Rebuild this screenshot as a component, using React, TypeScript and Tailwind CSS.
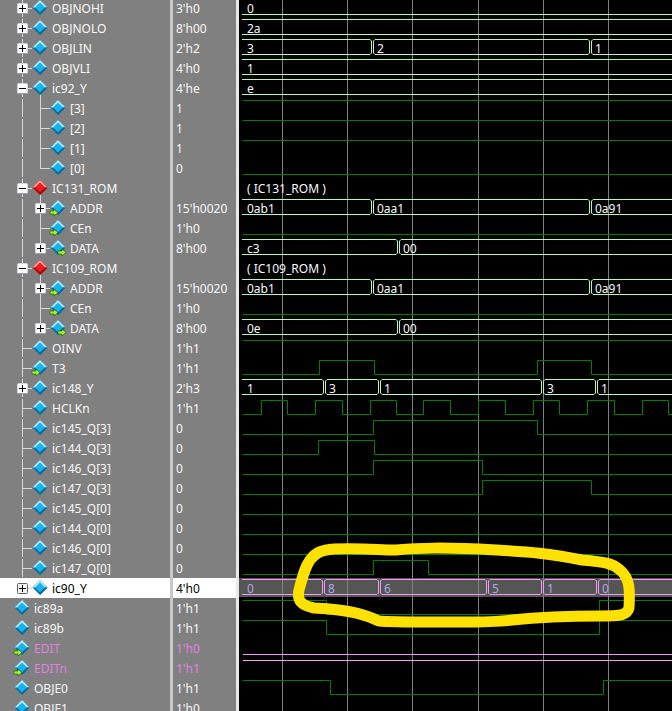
import React from 'react';

type IconKind = 'plain' | 'in' | 'out' | 'red';

interface Signal {
  name: string;
  value: string;
  level: 0 | 1 | 2;
  toggle?: '+' | '-';
  icon?: IconKind;
  last?: boolean;
  pink?: boolean;
}

const signals: Signal[] = [
  { name: 'OBJNOHI', value: "3'h0", level: 1, toggle: '+' },
  { name: 'OBJNOLO', value: "8'h00", level: 1, toggle: '+' },
  { name: 'OBJLIN', value: "2'h2", level: 1, toggle: '+' },
  { name: 'OBJVLI', value: "4'h0", level: 1, toggle: '+' },
  { name: 'ic92_Y', value: "4'he", level: 1, toggle: '-' },
  { name: '[3]', value: '1', level: 2 },
  { name: '[2]', value: '1', level: 2 },
  { name: '[1]', value: '1', level: 2 },
  { name: '[0]', value: '0', level: 2, last: true },
  { name: 'IC131_ROM', value: '', level: 1, toggle: '-', icon: 'red' },
  { name: 'ADDR', value: "15'h0020", level: 2, toggle: '+', icon: 'in' },
  { name: 'CEn', value: "1'h0", level: 2, icon: 'in' },
  { name: 'DATA', value: "8'h00", level: 2, toggle: '+', icon: 'out', last: true },
  { name: 'IC109_ROM', value: '', level: 1, toggle: '-', icon: 'red' },
  { name: 'ADDR', value: "15'h0020", level: 2, toggle: '+', icon: 'in' },
  { name: 'CEn', value: "1'h0", level: 2, icon: 'in' },
  { name: 'DATA', value: "8'h00", level: 2, toggle: '+', icon: 'out', last: true },
  { name: 'OINV', value: "1'h1", level: 1 },
  { name: 'T3', value: "1'h1", level: 1, icon: 'in' },
  { name: 'ic148_Y', value: "2'h3", level: 1, toggle: '+' },
  { name: 'HCLKn', value: "1'h1", level: 1 },
  { name: 'ic145_Q[3]', value: '0', level: 1 },
  { name: 'ic144_Q[3]', value: '0', level: 1 },
  { name: 'ic146_Q[3]', value: '0', level: 1 },
  { name: 'ic147_Q[3]', value: '0', level: 1 },
  { name: 'ic145_Q[0]', value: '0', level: 1 },
  { name: 'ic144_Q[0]', value: '0', level: 1 },
  { name: 'ic146_Q[0]', value: '0', level: 1 },
  { name: 'ic147_Q[0]', value: '0', level: 1 },
  { name: 'ic90_Y', value: "4'h0", level: 1, toggle: '+', last: true },
  { name: 'ic89a', value: "1'h1", level: 0 },
  { name: 'ic89b', value: "1'h1", level: 0 },
  { name: 'EDIT', value: "1'h0", level: 0, icon: 'in', pink: true },
  { name: 'EDITn', value: "1'h1", level: 0, icon: 'in', pink: true },
  { name: 'OBJE0', value: "1'h1", level: 0 },
  { name: 'OBJE1', value: "1'h0", level: 0 },
];

const SELECTED = 29;

// diamond icon, centred on cx / cy
const Diamond = ({ cx, cy, kind }: { cx: number; cy: number; kind: IconKind }) => {
  const red = kind === 'red';
  const light = red ? '#ff9a9a' : '#b4ecff';
  const mid = red ? '#ee1c1c' : '#16b4ee';
  const dark = red ? '#a80808' : '#0a6c9c';
  const r = 7.5;
  return (
    <g>
      <polygon points={`${cx},${cy - r} ${cx + r},${cy} ${cx},${cy + r} ${cx - r},${cy}`} fill={dark} />
      <polygon points={`${cx},${cy - r} ${cx + r},${cy} ${cx - r},${cy}`} fill={light} />
      <polygon points={`${cx},${cy - 5} ${cx + 5},${cy} ${cx},${cy + 5} ${cx - 5},${cy}`} fill={mid} />
      <polygon points={`${cx},${cy + r} ${cx + r},${cy} ${cx + 5},${cy} ${cx},${cy + 5}`} fill={dark} />
      {kind === 'in' && (
        <path d={`M${cx - 8} ${cy + 3.5}h4v-2l4 3.5l-4 3.5v-2h-4z`} fill="#a8f020" stroke="#0a5a10" strokeWidth="0.6" />
      )}
      {kind === 'out' && (
        <path d={`M${cx} ${cy + 3.5}h4v-2l4 3.5l-4 3.5v-2h-4z`} fill="#a8f020" stroke="#0a5a10" strokeWidth="0.6" />
      )}
    </g>
  );
};

const Toggle = ({ cx, open, selected }: { cx: number; open: boolean; selected: boolean }) => (
  <g>
    <rect x={cx - 4.5} y={5.5} width={10} height={10} rx={1} fill={selected ? '#f4f4f4' : '#ffffff'} stroke={selected ? '#606060' : '#d4d4dc'} />
    {!selected && <path d={`M${cx - 4} 15.5h9`} stroke="#9c9cac" />}
    <path d={`M${cx - 3} 10.5h7`} stroke="#000" strokeWidth="1" />
    {!open && <path d={`M${cx + 0.5} 7v7`} stroke="#000" strokeWidth="1" />}
  </g>
);

// tree connectors + toggle + icon for one row
const Gutter = ({ s, selected }: { s: Signal; selected: boolean }) => {
  const line = '#d8d8d8';
  const width = s.level === 0 ? 34 : s.level === 1 ? 52 : 70;
  const iconX = s.level === 0 ? 22 : s.level === 1 ? 40 : 58;
  return (
    <svg width={width} height={20} className="shrink-0">
      {s.level === 1 && !s.last && <path d="M22.5 1V19" stroke={line} />}
      {s.level === 1 && !s.toggle && <path d="M22 10.5H32" stroke={line} />}
      {s.level === 1 && s.toggle && <path d="M27 10.5H32" stroke={line} />}
      {s.level === 2 && <path d="M22.5 1V19" stroke={line} />}
      {s.level === 2 && <path d={s.last ? 'M40.5 0V10' : 'M40.5 0V20'} stroke={line} />}
      {s.level === 2 && <path d="M40 10.5H50" stroke={line} />}
      {s.toggle === '-' && s.level === 1 && <path d="M40.5 14V20" stroke={line} />}
      {s.toggle && <Toggle cx={s.level === 1 ? 22 : 40} open={s.toggle === '-'} selected={selected} />}
      <Diamond cx={iconX} cy={9.5} kind={s.icon ?? 'plain'} />
    </svg>
  );
};

const BIT = '#008000';
const BUS = '#b8f8b8';
const PINK = '#f09cf0';

const gridX = [282.5, 347.5, 412.5, 478.5, 543.5, 608.5];

// single bit trace: edges are the x of each level change
const Bit = ({ row, high, edges = [], color = BIT }: { row: number; high: boolean; edges?: number[]; color?: string }) => {
  const hi = row * 20 + 0.5;
  const lo = row * 20 + 14.5;
  let level = high;
  let d = `M243 ${level ? hi : lo}`;
  edges.forEach((x) => {
    level = !level;
    d += `H${x}V${level ? hi : lo}`;
  });
  d += 'H672';
  return <path d={d} fill="none" stroke={color} />;
};

// bus trace: edges are the crossing points, labels sit after each crossing
const Bus = ({ row, edges = [], labels, color = BUS, textColor = '#f8f8f8' }: { row: number; edges?: number[]; labels: string[]; color?: string; textColor?: string }) => {
  const top = row * 20 - 0.5;
  const bot = row * 20 + 14.5;
  const starts = [242, ...edges.map((x) => x + 3)];
  const ends = [...edges.map((x) => x - 2), 672];
  return (
    <g>
      {starts.map((s, i) => (
        <path key={i} d={`M${s} ${top}H${ends[i]}M${s} ${bot}H${ends[i]}`} fill="none" stroke={color} />
      ))}
      {edges.map((x) => (
        <path
          key={x}
          d={`M${x - 2} ${top}L${x - 0.5} ${top + 1.5}V${bot - 1.5}L${x - 2} ${bot}M${x + 3} ${top}L${x + 1.5} ${top + 1.5}V${bot - 1.5}L${x + 3} ${bot}`}
          fill="none"
          stroke={color}
        />
      ))}
      {labels.map((t, i) => (
        <text key={i} x={i === 0 ? 247 : edges[i - 1] + 5} y={row * 20 + 13} fill={textColor} fontSize="12">
          {t}
        </text>
      ))}
    </g>
  );
};

const clk = [74, 154, 236, 319, 401, 481, 562, 643, 727, 808, 890, 970, 1052, 1135, 1217, 1297].map((z) => Math.round(236 + z / 3) + 0.5);

const Waves = () => (
  <svg width={433} height={711} viewBox="239 0 433 711" className="block" style={{ fontFamily: '"Noto Sans", sans-serif' }}>
    <rect x={239} y={578} width={433} height={19} fill="#555555" />
    {gridX.map((x) => (
      <path key={x} d={`M${x} 0V711`} stroke="#808080" />
    ))}
    <Bus row={0} labels={['0']} />
    <Bus row={1} labels={['2a']} />
    <Bus row={2} edges={[372, 590]} labels={['3', '2', '1']} />
    <Bus row={3} labels={['1']} />
    <Bus row={4} labels={['e']} />
    <Bit row={5} high />
    <Bit row={6} high />
    <Bit row={7} high />
    <Bit row={8} high={false} />
    <text x={247} y={193} fill="#f8f8f8" fontSize="12">( IC131_ROM )</text>
    <Bus row={10} edges={[372, 590]} labels={['0ab1', '0aa1', '0a91']} />
    <Bit row={11} high={false} />
    <Bus row={12} edges={[398]} labels={['c3', '00']} />
    <text x={247} y={273} fill="#f8f8f8" fontSize="12">( IC109_ROM )</text>
    <Bus row={14} edges={[372, 590]} labels={['0ab1', '0aa1', '0a91']} />
    <Bit row={15} high={false} />
    <Bus row={16} edges={[398]} labels={['0e', '00']} />
    <Bit row={17} high />
    <Bit row={18} high={false} edges={[319.5, 374.5, 537.5, 591.5]} />
    <Bus row={19} edges={[324, 379, 542, 596]} labels={['1', '3', '1', '3', '1']} />
    <Bit row={20} high={false} edges={clk} />
    <Bit row={21} high={false} edges={[373.5, 537.5]} />
    <Bit row={22} high={false} edges={[318.5, 374.5]} />
    <Bit row={23} high={false} edges={[373.5, 482.5]} />
    <Bit row={24} high={false} edges={[482.5, 591.5]} />
    <Bit row={25} high={false} />
    <Bit row={26} high={false} />
    <Bit row={27} high={false} />
    <Bit row={28} high={false} edges={[373.5, 428.5]} />
    <Bus row={29} edges={[323, 379, 487, 542, 597]} labels={['0', '8', '6', '5', '1', '0']} color={PINK} textColor="#b0a8e8" />
    <Bit row={30} high edges={[326.5, 599.5]} />
    <Bit row={31} high edges={[326.5, 599.5]} />
    <Bit row={32} high={false} color={PINK} />
    <Bit row={33} high color={PINK} />
    <Bit row={34} high edges={[330.5, 603.5]} />
    <path
      d="M310 560C316 552 322 550 334 549C365 548 378 550 396 550C420 548 440 547 496 550C530 552 548 553 582 560C605 562 612 563 620 570C630 578 630 590 629 608C627 615 622 616 600 616C570 616 540 617 512 620C490 623 470 622 430 622C400 622 390 622 379 621C368 616 355 610 314 608C300 605 297 600 299 590C303 575 305 567 310 560Z"
      fill="none"
      stroke="#ffe100"
      strokeWidth="11"
      strokeLinejoin="round"
    />
  </svg>
);

export default function App() {
  return (
    <div className="flex h-[711px] w-[672px] overflow-hidden bg-[#808080] text-[12px] text-[#f8f8f8] [font-family:'Noto_Sans',sans-serif]">
      <div className="-mt-[2px] w-[170px] shrink-0">
        {signals.map((s, i) => (
          <div
            key={i}
            className={`flex h-5 items-center whitespace-nowrap ${i === SELECTED ? 'bg-white text-black' : s.pink ? 'text-[#e080e0]' : ''}`}
          >
            <Gutter s={s} selected={i === SELECTED} />
            <span className="mt-[2px]">{s.name}</span>
          </div>
        ))}
      </div>
      <div className="w-[3px] shrink-0 bg-[#c8c8c8]" />
      <div className="-mt-[2px] w-[63px] shrink-0">
        {signals.map((s, i) => (
          <div
            key={i}
            className={`flex h-5 items-center whitespace-nowrap pl-[3px] ${i === SELECTED ? 'bg-white text-black' : s.pink ? 'text-[#e080e0]' : ''}`}
          >
            <span className="mt-[2px]">{s.value}</span>
          </div>
        ))}
      </div>
      <div className="w-[3px] shrink-0 bg-[#e8e8e8]" />
      <div className="min-w-0 flex-1 bg-black">
        <Waves />
      </div>
    </div>
  );
}
